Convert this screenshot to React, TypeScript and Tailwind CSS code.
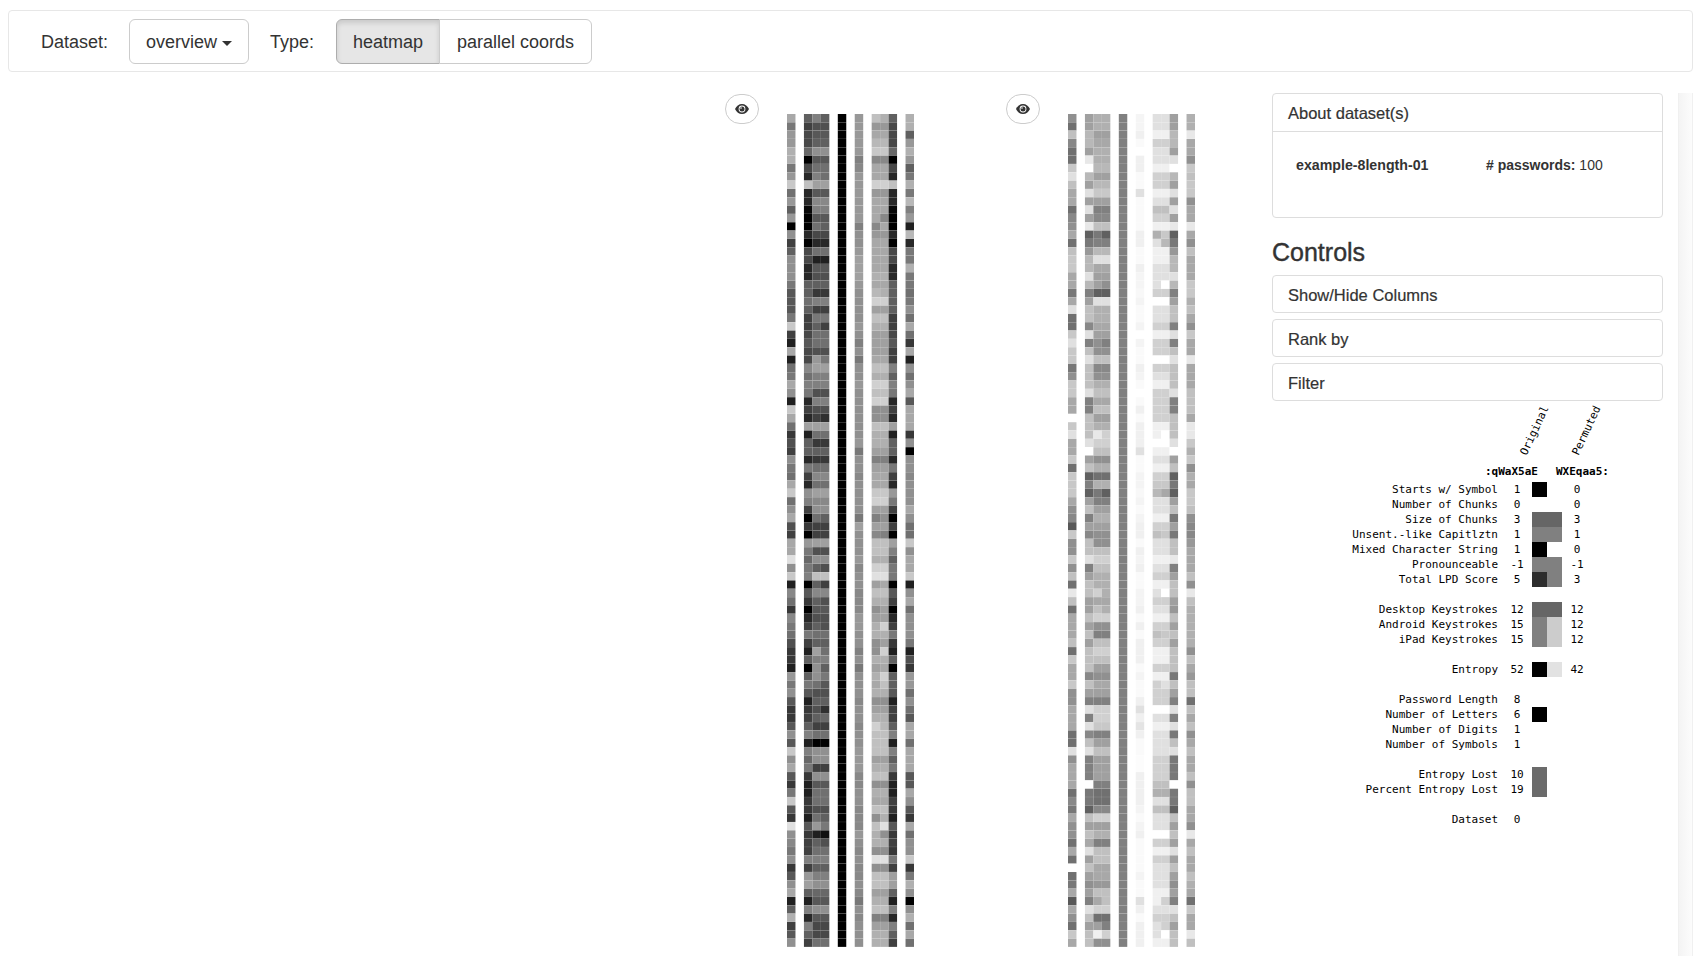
// grey levels read off the two heatmaps, one string per password
const ROWS_A = [
  'a8 60 80 60 00 98 c0 b0 60 b0', '78 40 50 50 00 98 98 98 48 b0', '98 48 58 58 00 98 a8 a8 48 60',
  '98 48 60 60 00 98 b8 b8 48 98', 'b0 68 90 90 00 98 c8 c8 68 b0', 'b0 00 58 58 00 80 88 88 00 98',
  '78 48 70 70 00 88 a8 a8 48 60', '98 28 80 70 00 98 a8 a8 28 78', 'c8 c0 a0 a0 00 98 d0 d0 c0 b0',
  '70 28 58 58 00 98 98 98 28 78', '98 28 88 88 00 98 a8 a8 28 b8', '60 08 80 80 00 98 a8 a8 08 80',
  '98 00 58 58 00 98 a8 88 00 98', '00 00 70 60 00 80 88 a8 00 20', '90 28 48 48 00 90 98 98 28 b8',
  '40 00 28 28 00 90 a8 a8 00 28', '60 48 70 70 00 98 a8 a8 48 78', '90 48 20 20 00 a0 a8 a8 48 78',
  '90 28 58 58 00 a0 a8 a8 28 b0', '90 28 50 50 00 a0 b0 b0 28 78', '78 60 60 60 00 98 a8 a8 60 78',
  '58 60 38 38 00 90 b8 b0 60 70', '58 70 80 80 00 90 d0 d0 60 78', '58 60 40 40 00 90 a0 a0 60 90',
  '78 40 78 78 00 90 c0 c0 40 70', 'c8 40 60 40 00 98 b0 b0 40 a8', '40 48 70 70 00 90 a0 a0 48 70',
  '20 58 70 70 00 80 a0 a0 58 38', 'a8 48 50 50 00 90 a0 a0 40 a8', '20 48 98 78 00 78 a8 a8 40 20',
  '70 88 a0 a0 00 90 c0 c0 80 90', '78 70 80 80 00 90 b0 b0 60 70', 'a8 80 80 80 00 98 d0 d0 80 90',
  '90 78 50 50 00 90 c0 c0 78 a8', '20 28 80 80 00 90 d0 d0 28 58', 'c8 40 50 50 00 90 90 90 40 a8',
  'a8 28 40 30 00 90 90 90 28 a8', '70 a0 a0 a0 00 90 c0 c0 a0 a8', '38 20 70 70 00 90 b0 b0 20 38',
  '50 60 38 38 00 98 b0 b0 60 90', '40 60 60 60 00 78 a0 a0 60 00', '90 28 38 38 00 90 80 80 28 90',
  '78 78 70 70 00 90 a0 a0 78 90', '70 40 88 88 00 88 a8 a8 40 88', 'a8 28 70 70 00 90 a8 a8 28 90',
  'c8 90 a0 a0 00 90 c8 c8 98 90', '70 80 88 88 00 90 d0 d0 78 90', '90 40 90 90 00 90 a0 a0 40 a8',
  'a8 00 70 60 00 78 80 90 00 90', '50 38 40 40 00 a0 a0 a0 40 70', '40 00 40 40 00 90 88 80 00 70',
  'a8 98 a0 a0 00 90 c0 c0 a0 c8', 'a8 78 50 50 00 90 c0 c0 80 90', 'e0 68 90 90 00 98 b0 b0 60 a8',
  '90 78 60 50 00 88 d0 d0 78 a8', 'c8 80 c0 c0 00 90 e0 e0 78 c8', '20 00 60 40 00 90 a0 a8 00 20',
  '88 58 88 88 00 88 c0 c0 58 90', '70 38 60 50 00 88 b0 b0 40 a8', '38 00 58 58 00 88 90 a0 00 70',
  '88 28 50 50 00 98 a0 a0 28 90', '78 40 60 50 00 98 b0 d0 40 90', '70 78 70 70 00 90 b0 b0 78 90',
  '50 40 60 60 00 90 90 a0 38 78', '38 20 a0 70 00 80 90 d0 20 20', '38 60 80 80 00 90 b0 b0 60 50',
  '20 00 90 60 00 78 a0 a8 00 38', '98 60 90 78 00 90 b0 d0 60 98', '78 78 70 58 00 90 a8 c0 60 98',
  '90 58 50 50 00 90 b0 b0 58 70', '58 20 60 60 00 88 90 90 20 90', '38 38 50 30 00 90 a0 a0 40 70',
  '38 40 60 68 00 90 b0 b0 40 58', '58 60 40 40 00 88 d0 b8 60 a8', '90 80 70 70 00 90 c0 c0 80 a8',
  '58 20 00 00 00 90 c0 c0 20 70', 'c8 80 90 90 00 98 c0 c0 80 a8', '90 68 90 90 00 98 a0 a0 60 a8',
  'a8 78 40 40 00 98 b0 b0 78 a8', '58 38 90 90 00 88 c0 c0 38 58', '38 20 58 58 00 88 90 90 20 58',
  '78 20 70 70 00 90 b0 b0 20 a8', 'c8 38 70 70 00 90 a8 a8 40 90', '58 38 50 50 00 88 c0 c0 38 58',
  '38 20 70 60 00 88 90 b0 20 38', 'e0 58 98 78 00 88 c0 e0 58 a8', '90 38 20 10 00 98 b0 90 38 70',
  '88 40 60 50 00 90 b0 b0 40 90', '78 40 70 70 00 88 90 90 38 90', '90 80 80 80 00 90 e0 e0 78 c8',
  '38 40 60 60 00 88 90 90 40 38', '58 98 80 80 00 88 c0 c0 a0 78', '90 a0 90 90 00 90 c0 c0 a0 b0',
  'a8 60 68 68 00 88 a0 a0 60 90', '20 20 58 58 00 78 b0 b0 20 00', '60 80 90 90 00 90 c0 c0 80 90',
  'b0 28 58 58 00 88 80 80 28 b0', '40 80 48 48 00 90 a0 a0 80 70', '58 60 48 48 00 90 b0 b0 60 a8',
  '90 40 70 70 00 90 b0 b0 40 70',
];

const ROWS_B = [
  '90 a0 b0 b0 80 f5 e0 e0 a0 b0', '70 a0 b0 b0 80 f5 e0 e0 a0 b0', 'c0 b8 a0 a0 80 f0 f0 f0 b8 e8',
  '88 b8 a8 a8 80 fa d0 d0 b8 a8', '70 a0 b0 b0 80 ff e0 e0 a0 a8', '70 e8 b0 b0 80 f0 e0 e0 e0 90',
  'c8 ff b8 b8 80 f0 f0 f0 ff c8', 'e0 b8 a0 a0 80 fa d0 d0 b8 c0', 'c0 a0 b8 b8 80 fa d0 d0 a0 c8',
  'a8 e0 c8 c8 80 e0 f0 f0 e0 c8', 'a8 a0 a0 a0 80 fa e0 e0 a0 90', '70 e0 80 80 80 fa c0 c0 e0 a8',
  '88 a0 88 88 80 fa d0 d0 a0 a8', '90 e8 c0 c0 80 fa f0 f0 e8 e8', 'a8 60 78 60 80 f0 b0 c8 60 a8',
  '70 78 80 80 80 f0 e0 b8 78 90', 'c0 98 b8 b8 80 fa f0 f0 98 c0', 'c8 b8 e0 e0 80 fa f0 f0 b8 a8',
  'c8 b8 a8 a8 80 f0 e0 e0 b8 a8', 'a8 e0 a0 a0 80 f5 e0 e0 e0 a8', 'a8 b8 a0 90 80 f5 e0 ff b8 c8',
  '78 80 60 60 80 f8 d0 d0 80 c8', 'a8 a0 e0 e0 80 f4 ff ff a0 b0', 'e0 c0 b0 b0 80 fa e0 e0 c0 c0',
  '70 c0 b0 b0 80 fa e0 e0 c0 a8', '70 88 a8 a8 80 f4 d0 d0 80 90', 'c8 e0 a0 a0 80 ff f0 f0 e0 c8',
  'e0 80 90 80 80 f4 d0 d0 80 a8', 'c8 c0 90 90 80 fa d0 d0 c0 a8', 'c8 e0 c0 c0 80 fa ff ff e0 e8',
  '78 c0 88 88 80 f0 d0 d0 c0 a8', '90 c0 90 90 80 f4 e0 e0 c0 a8', 'c8 c0 b0 b0 80 fa f0 f0 c0 a8',
  'c8 e0 c0 c0 80 ff d0 d0 e0 c0', 'a8 80 a8 a8 80 fa d0 d0 80 c0', 'a8 80 c0 c0 80 f0 d0 d0 80 c0',
  'ff c0 a0 a0 80 fa d0 d0 c0 a8', 'c8 c0 b0 b0 80 f0 f0 f0 c0 e8', 'e0 c0 e8 d0 80 f0 f0 ff c0 e8',
  'a8 e0 d0 d0 80 f0 ff ff e0 c8', 'a8 ff c0 c0 80 e0 f0 f0 ff b0', 'c8 a0 90 90 80 fa e0 e0 a0 c8',
  '70 c0 b0 b0 80 fa f0 f0 c0 90', 'c8 60 70 70 80 f4 d0 d0 60 b0', 'c8 80 b0 b0 80 f4 c8 c8 78 a8',
  'c8 60 78 60 80 f8 b8 a8 60 c8', 'a8 a0 80 80 80 f4 e0 e0 a0 c8', '90 c0 a0 a0 80 fa e0 e0 c0 c0',
  '88 80 b0 b0 80 f4 f0 f0 78 90', '58 a0 a0 a0 80 f0 d0 d0 a0 88', 'c8 88 90 90 80 f0 c0 c8 78 88',
  '90 c0 90 90 80 fa e0 e0 c0 98', '90 c0 c0 c0 80 f0 e0 e0 c0 a8', 'c8 e0 d0 d0 80 f4 f0 f0 e8 a8',
  '90 80 c0 c0 80 f0 e0 e0 80 a8', 'c0 a0 b0 b0 80 fa d0 d0 a0 c0', '70 c0 b0 b0 80 fa f0 f0 c0 90',
  'e8 c0 d0 b0 80 f4 e0 ff c0 e8', 'c0 a0 a8 a8 80 f4 d0 d0 a0 c0', '70 a0 c0 b0 80 f0 e0 e0 98 b0',
  'a8 c0 d0 d0 80 fa f0 f0 c0 b0', 'a8 a0 90 90 80 f0 d0 d0 a0 b0', 'a8 c0 80 80 80 fa c0 c8 c0 b0',
  'c0 a0 c0 c0 80 f0 d0 d0 a0 b0', '70 c0 d0 d0 80 f0 f0 f0 c0 90', 'c8 c0 c0 c0 80 f0 f0 f0 c0 c0',
  'a8 c0 a0 a0 80 fa d0 d0 c0 a8', 'a8 88 90 90 80 f4 f0 f0 78 98', 'c8 c0 a8 a8 80 fa d0 e0 c0 c0',
  '90 a0 a0 a0 80 fa d0 d0 a0 c0', '90 80 80 80 80 f0 d0 d0 80 70', 'a8 e0 d0 d0 80 e0 ff ff e0 c0',
  'a8 80 d0 d0 80 f0 e0 e0 80 a8', 'a8 e0 c8 c8 80 e4 f0 f0 e0 c0', '70 88 80 80 80 f0 e0 e0 78 90',
  '70 c0 a0 a0 80 fa e0 e0 c0 a8', 'e0 e0 c0 c0 80 fa e0 e0 e0 c0', '90 80 a0 a0 80 fc d0 d0 78 a8',
  'a8 80 a0 a0 80 fc d0 d0 78 a8', 'a8 80 a0 a0 80 f0 d0 d0 78 c0', 'a8 ff 80 80 80 f0 c0 c0 ff 90',
  '70 78 70 70 80 f0 b0 b0 78 c0', '88 78 70 70 80 f0 e0 e0 78 c0', '78 60 88 88 80 f4 c0 c0 60 a8',
  'a8 c0 d0 d0 80 fa e0 e0 c0 a8', '90 a0 a0 a0 80 f4 e0 e0 a0 90', '90 c0 b0 b0 80 f0 ff ff c0 e8',
  '70 a8 80 80 80 fa d0 d0 a0 a8', 'a8 e0 c0 c0 80 fa f0 f0 e0 c0', '70 a0 c0 c0 80 fa d0 d0 a0 a8',
  'ff c0 a8 a8 80 fa e0 e0 c0 a8', '70 a0 a8 a8 80 f4 e0 e0 a0 c0', '78 90 98 98 80 fa e0 e0 90 b0',
  'a8 a0 c0 c0 80 fa f0 f0 a0 a8', '58 80 a8 c0 80 e0 f0 d0 80 70', 'a8 e0 d0 d0 80 f0 e0 e0 e0 c8',
  '90 c0 70 70 80 fa d0 d0 c0 a8', '70 a0 a0 80 80 f0 e0 d0 a0 a8', 'c8 c0 f0 d0 80 f0 e0 ff c0 e8',
  'a8 c0 90 90 80 f0 f0 f0 c0 c0',
];

const COLUMN_SLOTS = [0, 2, 3, 4, 6, 8, 10, 11, 12, 14];
const CELL_W = 127 / 15;
const CELL_H = 833 / 100;

function parseRows(rows: string[]) {
  return rows.map((row) => row.split(' ').map((v) => parseInt(v, 16)));
}

const HEAT_A = parseRows(ROWS_A);
const HEAT_B = parseRows(ROWS_B);

function EyeIcon() {
  return (
    <svg width="14" height="10" viewBox="0 0 14 10">
      <path
        d="M7 0C3.9 0 1.4 2 0 5c1.4 3 3.9 5 7 5s5.6-2 7-5c-1.4-3-3.9-5-7-5z"
        fill="#333"
      />
      <circle cx="7" cy="5" r="3.4" fill="#fff" />
      <circle cx="7" cy="5" r="2.5" fill="#333" />
      <circle cx="6" cy="4" r="0.8" fill="#fff" />
    </svg>
  );
}

function Heatmap({ rows }: { rows: number[][] }) {
  return (
    <svg width="127" height="833" className="mt-[20px] block shrink-0">
      {rows.map((row, r) =>
        row.map((v, c) => (
          <rect
            key={`${r}-${c}`}
            x={COLUMN_SLOTS[c] * CELL_W}
            y={r * CELL_H}
            width={CELL_W}
            height={CELL_H - 0.12}
            fill={`rgb(${v},${v},${v})`}
          />
        ))
      )}
    </svg>
  );
}

function EyeButton() {
  return (
    <button className="flex h-[30px] w-[34px] shrink-0 items-center justify-center rounded-full border border-[#ccc] bg-white">
      <EyeIcon />
    </button>
  );
}

function Panel({ title }: { title: string }) {
  return (
    <div className="mb-[6px] flex h-[38px] items-center rounded-[4px] border border-[#ddd] bg-white px-[15px] pt-[2px] text-[16.5px] text-[#333] [-webkit-text-stroke:0.2px_#333]">
      {title}
    </div>
  );
}

type LegendRow = { label: string; a: string; b?: string; ca?: string; cb?: string } | null;

const LEGEND: LegendRow[] = [
  { label: 'Starts w/ Symbol', a: '1', b: '0', ca: '#000', cb: '#fff' },
  { label: 'Number of Chunks', a: '0', b: '0' },
  { label: 'Size of Chunks', a: '3', b: '3', ca: '#666', cb: '#666' },
  { label: 'Unsent.-like Capitlztn', a: '1', b: '1', ca: '#808080', cb: '#808080' },
  { label: 'Mixed Character String', a: '1', b: '0', ca: '#000', cb: '#fff' },
  { label: 'Pronounceable', a: '-1', b: '-1', ca: '#808080', cb: '#808080' },
  { label: 'Total LPD Score', a: '5', b: '3', ca: '#2d2d2d', cb: '#808080' },
  null,
  { label: 'Desktop Keystrokes', a: '12', b: '12', ca: '#666', cb: '#666' },
  { label: 'Android Keystrokes', a: '15', b: '12', ca: '#808080', cb: '#ccc' },
  { label: 'iPad Keystrokes', a: '15', b: '12', ca: '#808080', cb: '#ccc' },
  null,
  { label: 'Entropy', a: '52', b: '42', ca: '#000', cb: '#e2e2e2' },
  null,
  { label: 'Password Length', a: '8' },
  { label: 'Number of Letters', a: '6', ca: '#000' },
  { label: 'Number of Digits', a: '1' },
  { label: 'Number of Symbols', a: '1' },
  null,
  { label: 'Entropy Lost', a: '10', ca: '#6b6b6b' },
  { label: 'Percent Entropy Lost', a: '19', ca: '#6b6b6b' },
  null,
  { label: 'Dataset', a: '0' },
];

function Legend() {
  return (
    <div className="font-['DejaVu_Sans_Mono',monospace] text-[11px] leading-[15px] text-black">
      <div className="flex h-[63px] items-center pb-[4px]">
        <span className="ml-[236px] w-[53px] -rotate-[65deg] text-center">Original</span>
        <span className="ml-[-1px] w-[53px] -rotate-[65deg] text-center">Permuted</span>
      </div>
      <div className="mb-[3px] flex h-[15px] font-bold">
        <span className="ml-[213px]">:qWaX5aE</span>
        <span className="ml-[18px]">WXEqaa5:</span>
      </div>
      {LEGEND.map((row, i) =>
        row ? (
          <div key={i} className="flex h-[15px]">
            <span className="w-[226px] whitespace-pre text-right">{row.label}</span>
            <span className="w-[34px] pl-[4px] text-center">{row.a}</span>
            <span className="h-[15px] w-[15px]" style={{ background: row.ca }} />
            <span className="h-[15px] w-[15px]" style={{ background: row.cb }} />
            <span className="w-[30px] text-center">{row.b}</span>
          </div>
        ) : (
          <div key={i} className="h-[15px]" />
        )
      )}
    </div>
  );
}

export default function App() {
  return (
    <div className="h-[956px] overflow-hidden bg-white font-['Liberation_Sans',Arial,sans-serif] text-[#333]">
      {/* Toolbar */}
      <div className="pt-[10px] pl-[8px] pr-[12px]">
        <div className="flex h-[62px] items-center rounded-[4px] border border-[#e7e7e7] bg-white pl-[32px] text-[18px]">
          <span className="pt-[2px]">Dataset:</span>
          <button className="ml-[21px] flex h-[45px] w-[120px] items-center justify-center rounded-[6px] border border-[#ccc] bg-white pt-[2px]">
            overview
            <span className="ml-[5px] mt-[2px] h-0 w-0 border-x-[5px] border-t-[5px] border-x-transparent border-t-[#333]" />
          </button>
          <span className="ml-[21px] pt-[2px]">Type:</span>
          <div className="ml-[22px] flex h-[45px]">
            <button className="w-[104px] rounded-l-[6px] border border-[#adadad] bg-[#e6e6e6] pt-[2px] shadow-[inset_0_3px_5px_rgba(0,0,0,0.125)]">
              heatmap
            </button>
            <button className="ml-[-1px] w-[153px] rounded-r-[6px] border border-[#ccc] bg-white pt-[2px]">
              parallel coords
            </button>
          </div>
        </div>
      </div>

      {/* Heatmaps and sidebar */}
      <div className="flex items-start pt-[22px]">
        <div className="ml-[725px] flex w-[547px] items-start">
          <EyeButton />
          <div className="ml-[28px]">
            <Heatmap rows={HEAT_A} />
          </div>
          <div className="ml-[92px]">
            <EyeButton />
          </div>
          <div className="ml-[28px]">
            <Heatmap rows={HEAT_B} />
          </div>
        </div>

        <div className="mt-[-1px] w-[391px] shrink-0">
          <div className="h-[125px] rounded-[4px] border border-[#ddd] bg-white">
            <div className="flex h-[38px] items-center border-b border-[#ddd] px-[15px] pt-[2px] text-[16.5px] [-webkit-text-stroke:0.2px_#333]">
              About dataset(s)
            </div>
            <div className="flex pl-[23px] pt-[23px] text-[14.2px]">
              <span className="w-[190px] font-bold">example-8length-01</span>
              <span className="text-[14px]">
                <b># passwords:</b> 100
              </span>
            </div>
          </div>
          <h3 className="mt-[19px] mb-[7px] text-[25px] leading-[31px] font-medium [-webkit-text-stroke:0.4px_#333]">
            Controls
          </h3>
          <Panel title="Show/Hide Columns" />
          <Panel title="Rank by" />
          <div className="flex h-[38px] items-center rounded-[4px] border border-[#ddd] bg-white px-[15px] pt-[2px] text-[16.5px] [-webkit-text-stroke:0.2px_#333]">
            Filter
          </div>
          <Legend />
        </div>

        {/* Scroll track */}
        <div className="ml-[15px] mt-[-1px] h-[870px] w-[15px] shrink-0 border-x border-[#f0f0f0] bg-gradient-to-r from-[#f4f4f4] to-[#fcfcfc]" />
      </div>
    </div>
  );
}
